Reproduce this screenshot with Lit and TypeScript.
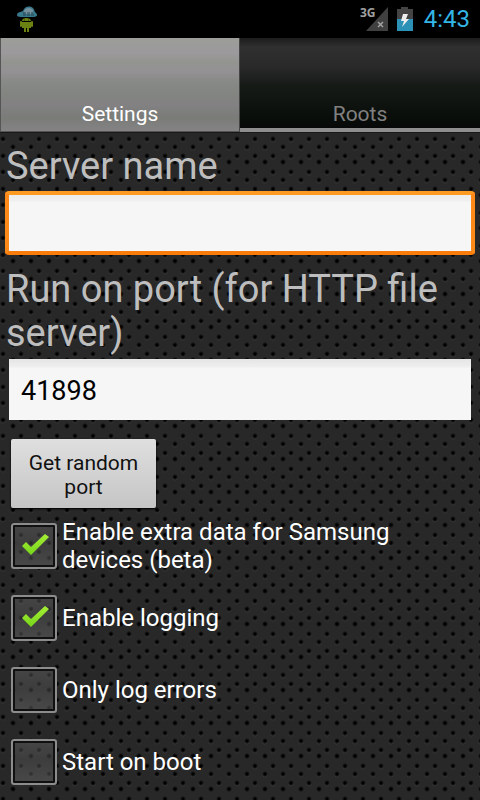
import { LitElement, html, css } from "lit";
import { customElement, property, state } from "lit/decorators.js";

@customElement("status-bar")
class StatusBar extends LitElement {
  static styles = css`
    :host {
      display: flex;
      align-items: center;
      justify-content: space-between;
      height: 38px;
      padding: 0 10px 0 16px;
      background: #000;
    }
    .indicators {
      display: flex;
      align-items: center;
    }
    .signal {
      margin-right: 9px;
      overflow: visible;
    }
    .battery { margin-right: 11px; }
    .clock {
      color: #33b5e5;
      font-size: 24px;
      line-height: 38px;
    }
    .network {
      font: bold 12px "Open Sans", sans-serif;
      fill: #a0a0a0;
    }
    svg { display: block; }
  `;

  render() {
    return html`
      <svg width="22" height="28" viewBox="0 0 22 28" aria-label="File server running">
        <path d="M1 10C1 7 5 7 7 6C8 2 13 0 17 3C19 5 18 7 20 8C23 11 19 12 16 12L5 12C2 12 1 11 1 10Z" fill="#38788b" />
        <path d="M8 6C9 3 13 2 16 4C18 6 17 8 15 9H9Z" fill="#7591a0" />
        <path d="M7 8H17M7 10H18" stroke="#25414d" stroke-dasharray="3 1" />
        <path d="M6 16C6 14 8 13 10 13C13 13 15 14 15 16ZM6 17H15V23H13V27H11V23H10V27H8V23H6Z" fill="#6b8111" />
        <path d="M5 17V21M16 17V21" stroke="#6b8111" stroke-width="2" stroke-linecap="round" />
        <path d="M8 15H9M12 15H13" stroke="#293300" />
      </svg>
      <div class="indicators">
        <svg class="signal" width="28" height="26" viewBox="0 0 28 26" aria-label="3G, no data">
          <path d="M28 1V25H6Z" fill="#404040" />
          <text class="network" x="0" y="11">3G</text>
          <path d="M18 16L23 21M23 16L18 21" stroke="#a6a6a6" stroke-width="1.4" />
        </svg>
        <svg class="battery" width="16" height="24" viewBox="0 0 16 24" aria-label="Battery charging">
          <path d="M0 2H4V0H11V2H16V12H0Z" fill="#444" />
          <path d="M0 12H16V24H0Z" fill="#2b91b7" />
          <path d="M6 7H11L9 12H12L5 20L7 14H4Z" fill="#eee" />
        </svg>
        <span class="clock">4:43</span>
      </div>
    `;
  }
}

@customElement("check-row")
class CheckRow extends LitElement {
  @property() label!: string;
  @property({ type: Boolean }) checked!: boolean;

  static styles = css`
    :host { display: block; }
    .row {
      display: grid;
      grid-template-columns: 46px minmax(0, 1fr);
      align-items: center;
      column-gap: 5px;
      min-height: 72px;
      padding: 0 64px 0 11px;
      color: #fff;
      font-size: 24px;
      line-height: 28px;
    }
    .box, .tick {
      grid-column: 1;
      grid-row: 1;
    }
    .box {
      appearance: none;
      box-sizing: border-box;
      width: 46px;
      height: 46px;
      margin: 0;
      border: 2px solid #8c8c8c;
      border-radius: 3px;
      background: linear-gradient(#6667, #5557 45%, #6668);
      box-shadow: inset 0 0 0 2px #101010;
    }
    .tick {
      justify-self: center;
      pointer-events: none;
      visibility: hidden;
    }
    .box:checked + .tick { visibility: visible; }
    .text {
      grid-column: 2;
      grid-row: 1;
    }
  `;

  render() {
    return html`
      <label class="row">
        <input class="box" type="checkbox" .checked=${this.checked} />
        <svg class="tick" width="46" height="46" viewBox="0 0 46 46">
          <defs>
            <linearGradient id="green" x1="0" y1="0" x2="0" y2="1">
              <stop offset="0" stop-color="#a5ef35" />
              <stop offset="1" stop-color="#77d51b" />
            </linearGradient>
          </defs>
          <path d="M11 23L15 19L20 24L34 11L38 14L20 32Z" fill="url(#green)" />
        </svg>
        <span class="text">${this.label}</span>
      </label>
    `;
  }
}

@customElement("app-root")
class AppRoot extends LitElement {
  @state() private options = [
    { label: "Enable extra data for Samsung devices (beta)", checked: true },
    { label: "Enable logging", checked: true },
    { label: "Only log errors", checked: false },
    { label: "Start on boot", checked: false },
  ];

  static styles = css`
    :host {
      display: block;
      min-height: 100vh;
      font-family: Roboto, sans-serif;
      background-color: #282828;
      background-image:
        radial-gradient(circle at 3px 7px, #000 1px, #0000 3px),
        radial-gradient(circle at 3px 24px, #000 1px, #0000 3px),
        radial-gradient(circle at 13px 15px, #000 1px, #0000 3px),
        radial-gradient(circle at 13px 30px, #000 1px, #0000 3px),
        radial-gradient(circle at 3px 8px, #343434 2px, #0000 3px),
        radial-gradient(circle at 3px 25px, #343434 2px, #0000 3px),
        radial-gradient(circle at 13px 16px, #343434 2px, #0000 3px);
      background-size: 18px 33px;
    }
    .tabs {
      display: grid;
      grid-template-columns: 1fr 1fr;
      height: 95px;
      box-sizing: border-box;
      border-bottom: 1px solid #181818;
    }
    .tab {
      display: flex;
      align-items: flex-end;
      justify-content: center;
      border: 0;
      margin: 0;
      padding: 0 0 2px;
      font: 21px/24px Roboto, sans-serif;
    }
    .active {
      color: #fff;
      padding: 0 0 5px;
      border-left: 1px solid #555;
      border-right: 1px solid #444;
      border-bottom: 1px solid #555;
      background: linear-gradient(#9c9e99, #9c999c 16%, #939590 25%, #949194 36%, #868985 48%, #828580 60%, #838183 72%, #7a7c78 86%, #858385);
    }
    .idle {
      color: #808080;
      border-bottom: 4px solid #8e8e8e;
      background: linear-gradient(#1c1c1c, #303030 10%, #292929 32%, #171b18 52%, #0b0f0c 85%, #060907);
    }
    .form {
      display: flex;
      flex-direction: column;
      padding: 11px 5px 0;
    }
    .caption {
      padding-left: 1px;
      color: #bebebe;
      font-size: 38px;
      line-height: 44px;
    }
    .field {
      box-sizing: border-box;
      font: 27px/32px Roboto, sans-serif;
      color: #000;
      outline: 0;
      border: 0;
      border-radius: 0;
    }
    .name {
      height: 64px;
      margin: 3px 0 12px;
      padding: 0 12px;
      border: 4px solid #000;
      border-radius: 4px;
      border-color: #ff9a22 #fd8a18 #fa7d0c;
      background: linear-gradient(#ededee, #f1f0f1 6px, #f7f6f7 7px);
    }
    .port {
      height: 61px;
      margin: 4px 4px 19px;
      padding: 2px 12px 0;
      background: linear-gradient(#e5e5e6, #f0eff0 8px, #f7f6f7 9px);
    }
    .random {
      align-self: flex-start;
      width: 145px;
      height: 69px;
      margin: 0 6px 2px;
      padding: 2px 12px 0;
      border: 0;
      border-radius: 2px;
      color: #111;
      font: 21px/24px Roboto, sans-serif;
      background: linear-gradient(#dfdfdf, #c5c5c5);
      box-shadow: 0 1px 2px #000;
    }
  `;

  render() {
    return html`
      <status-bar></status-bar>
      <div class="tabs" role="tablist">
        <button class="tab active" role="tab" aria-selected="true">Settings</button>
        <button class="tab idle" role="tab" aria-selected="false">Roots</button>
      </div>
      <div class="form">
        <label class="caption" for="name">Server name</label>
        <input class="field name" id="name" type="text" />
        <label class="caption" for="port">Run on port (for HTTP file server)</label>
        <input class="field port" id="port" type="text" inputmode="numeric" value="41898" />
        <button class="random">Get random port</button>
      </div>
      ${this.options.map(
        (o) => html`<check-row .label=${o.label} .checked=${o.checked}></check-row>`
      )}
    `;
  }
}
